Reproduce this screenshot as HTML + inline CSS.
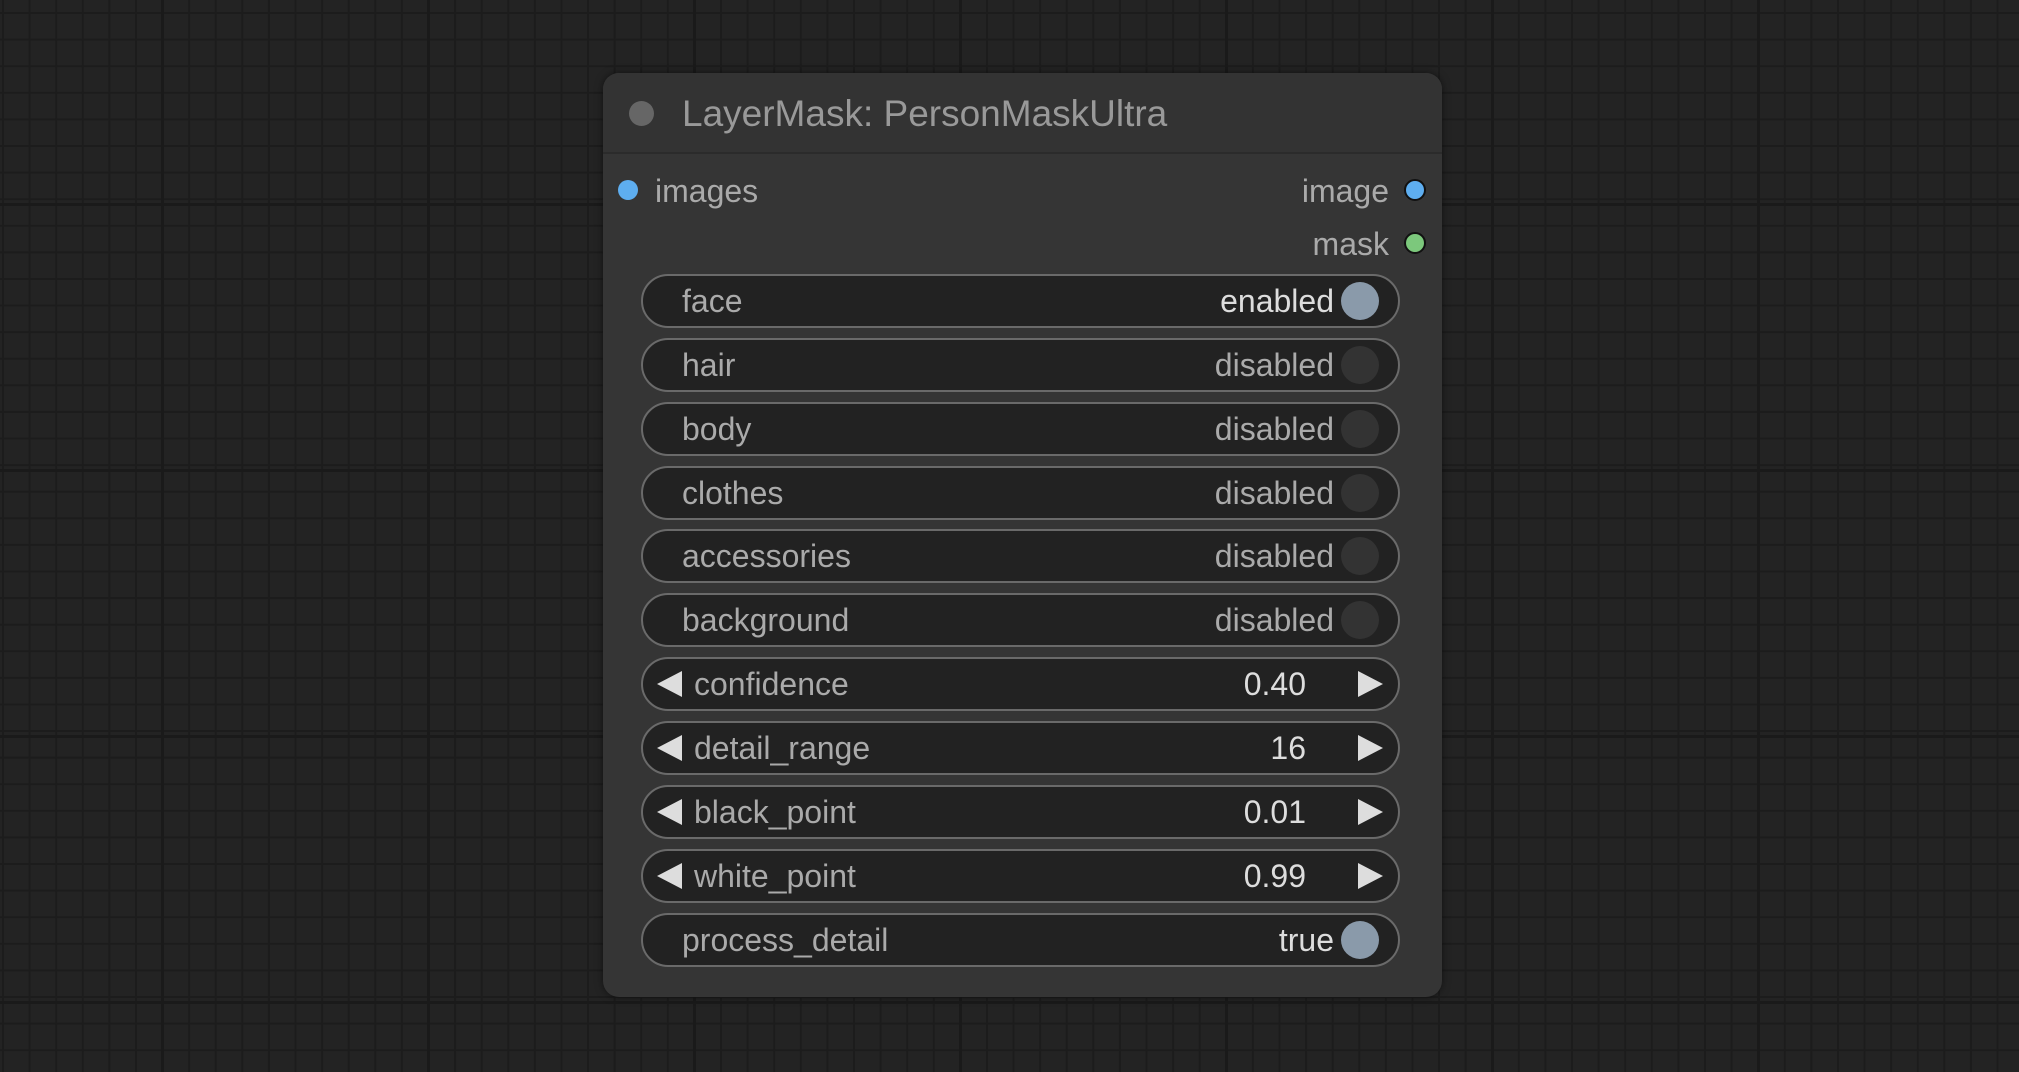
<!DOCTYPE html>
<html><head><meta charset="utf-8"><style>
html,body{margin:0;padding:0}
body{width:2019px;height:1072px;overflow:hidden;position:relative;font-family:"Liberation Sans",Arial,sans-serif;
background-color:#232323;
background-image:
linear-gradient(90deg,#1a1a1a 0 3px,transparent 3px),
linear-gradient(0deg,transparent calc(100% - 3px),#1a1a1a calc(100% - 3px)),
linear-gradient(90deg,#1c1c1c 0 2px,transparent 2px),
linear-gradient(0deg,#1c1c1c 0 2px,transparent 2px);
background-size:266px 266px,266px 266px,26.6px 26.6px,26.6px 26.6px;
background-position:161px 0,0 203px,2px 0,0 14px;}
.node{position:absolute;left:603px;top:73px;width:839px;height:924px;background:#353535;border-radius:16px;box-shadow:0 0 8px rgba(0,0,0,.5)}
.title{position:absolute;left:0;top:0;width:839px;height:79px;background:#333;border-radius:16px 16px 0 0;border-bottom:2px solid #2b2b2b}
.t{position:absolute;white-space:nowrap;line-height:1}
.dot{position:absolute;border-radius:50%}
.w{position:absolute;left:38px;width:755px;height:50px;border:2px solid #6a6a6a;border-radius:27px;background:#222}
.w .l{position:absolute;left:39px;top:9px;font-size:32px;color:#aaa;line-height:1}
.w .v{position:absolute;right:64px;top:9px;font-size:32px;color:#aaa;line-height:1}
.w .v.on{color:#ddd}
.w .k{position:absolute;right:19px;top:6px;width:38px;height:38px;border-radius:50%;background:#333}
.w .k.on{background:#8a9aaa}
.n .l{left:51px}
.n .v{right:92px;color:#ddd}
.la{position:absolute;left:14px;top:12px;width:0;height:0;border-top:13px solid transparent;border-bottom:13px solid transparent;border-right:25px solid #ddd}
.ra{position:absolute;right:15px;top:12px;width:0;height:0;border-top:13px solid transparent;border-bottom:13px solid transparent;border-left:25px solid #ddd}
</style></head><body>
<div class="node">
<div class="title"></div>
<div class="dot" style="left:26px;top:28px;width:25px;height:25px;background:#666"></div>
<div class="t" style="left:79px;top:22px;font-size:37px;color:#999">LayerMask: PersonMaskUltra</div>
<div class="dot" style="left:15px;top:107px;width:20px;height:20px;background:#5eaef0"></div>
<div class="t" style="left:52px;top:102px;font-size:32px;color:#aaa">images</div>
<div class="t" style="right:53px;top:102px;font-size:32px;color:#aaa">image</div>
<div class="dot" style="left:801px;top:106px;width:18px;height:18px;background:#5eaef0;border:2px solid #111"></div>
<div class="t" style="right:53px;top:155px;font-size:32px;color:#aaa">mask</div>
<div class="dot" style="left:801px;top:159px;width:18px;height:18px;background:#7cc87c;border:2px solid #111"></div>

<div class="w" style="top:201px"><span class="l">face</span><span class="v on">enabled</span><span class="k on"></span></div>
<div class="w" style="top:265px"><span class="l">hair</span><span class="v">disabled</span><span class="k"></span></div>
<div class="w" style="top:329px"><span class="l">body</span><span class="v">disabled</span><span class="k"></span></div>
<div class="w" style="top:393px"><span class="l">clothes</span><span class="v">disabled</span><span class="k"></span></div>
<div class="w" style="top:456px"><span class="l">accessories</span><span class="v">disabled</span><span class="k"></span></div>
<div class="w" style="top:520px"><span class="l">background</span><span class="v">disabled</span><span class="k"></span></div>
<div class="w n" style="top:584px"><span class="la"></span><span class="l">confidence</span><span class="v">0.40</span><span class="ra"></span></div>
<div class="w n" style="top:648px"><span class="la"></span><span class="l">detail_range</span><span class="v">16</span><span class="ra"></span></div>
<div class="w n" style="top:712px"><span class="la"></span><span class="l">black_point</span><span class="v">0.01</span><span class="ra"></span></div>
<div class="w n" style="top:776px"><span class="la"></span><span class="l">white_point</span><span class="v">0.99</span><span class="ra"></span></div>
<div class="w" style="top:840px"><span class="l">process_detail</span><span class="v on">true</span><span class="k on"></span></div>
</div>
</body></html>
